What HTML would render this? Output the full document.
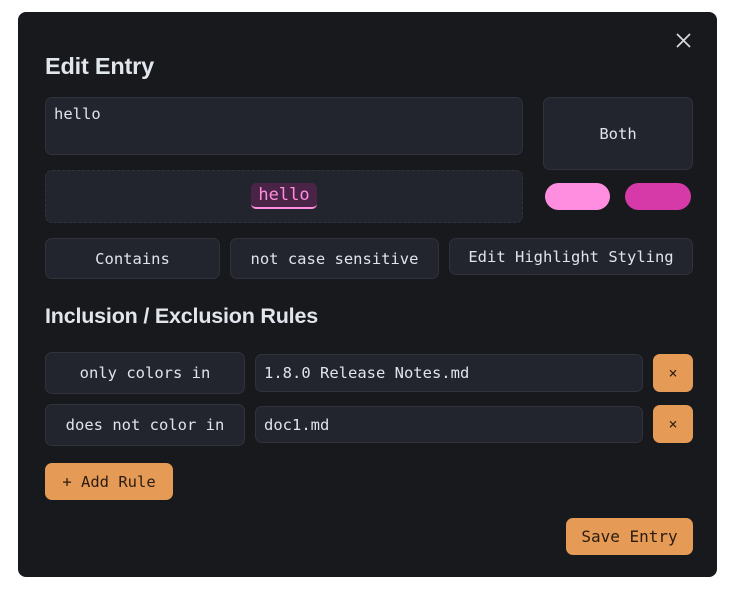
<!DOCTYPE html>
<html><head><style>
*{box-sizing:border-box;margin:0;padding:0}
body{width:735px;height:600px;background:#fff;position:relative;overflow:hidden;font-family:"DejaVu Sans Mono",monospace;}
.m{position:absolute;left:18px;top:12px;width:699px;height:565px;background:#18191d;border-radius:8px}
.a{position:absolute}
.box{position:absolute;background:#22242e;border:1px solid #30333c;border-radius:7px;color:#dfe4ea;font-size:15.5px;display:flex;align-items:center;justify-content:center}
.h{position:absolute;font-family:"Liberation Sans",sans-serif;font-weight:bold;color:#e1e6ec;letter-spacing:-0.2px}
.or{position:absolute;background:#e59a56;border-radius:7px;color:#2a1c10;font-size:15.5px;display:flex;align-items:center;justify-content:center}
</style></head><body>
<div class="m"></div>
<svg class="a" style="left:676px;top:33px" width="15" height="15"><path d="M1 1L14 14M14 1L1 14" stroke="#d6dbe2" stroke-width="1.7"/></svg>
<div class="h" style="left:45px;top:53px;font-size:23.5px">Edit Entry</div>
<div class="box" style="left:45px;top:97px;width:478px;height:58px;align-items:flex-start;justify-content:flex-start;padding:7px 0 0 8px">hello</div>
<div class="box" style="left:543px;top:97px;width:150px;height:73px">Both</div>
<div class="box" style="left:45px;top:170px;width:478px;height:53px;border:1px dashed #30333c"></div>
<div class="a" style="left:251px;top:183px;width:66px;height:26px;background:#4a2447;border-radius:5px;border-bottom:2px solid #ff8ee0;color:#ff8ee0;font-size:17px;text-align:center;line-height:24px">hello</div>
<div class="a" style="left:545px;top:183px;width:65px;height:27px;background:#ff8ee0;border-radius:14px"></div>
<div class="a" style="left:625px;top:183px;width:66px;height:27px;background:#d63aa8;border-radius:14px"></div>
<div class="box" style="left:45px;top:238px;width:175px;height:41px">Contains</div>
<div class="box" style="left:230px;top:238px;width:209px;height:41px">not case sensitive</div>
<div class="box" style="left:449px;top:238px;width:244px;height:37px">Edit Highlight Styling</div>
<div class="h" style="left:45px;top:304px;font-size:21.5px">Inclusion / Exclusion Rules</div>
<div class="box" style="left:45px;top:352px;width:200px;height:42px">only colors in</div>
<div class="box" style="left:255px;top:354px;width:388px;height:38px;justify-content:flex-start;padding-left:8px">1.8.0 Release Notes.md</div>
<div class="or" style="left:653px;top:354px;width:40px;height:38px;font-size:15px">×</div>
<div class="box" style="left:45px;top:404px;width:200px;height:42px">does not color in</div>
<div class="box" style="left:255px;top:406px;width:388px;height:37px;justify-content:flex-start;padding-left:8px">doc1.md</div>
<div class="or" style="left:653px;top:405px;width:40px;height:38px;font-size:15px">×</div>
<div class="or" style="left:45px;top:463px;width:128px;height:37px">+ Add Rule</div>
<div class="or" style="left:566px;top:518px;width:127px;height:37px;font-size:16px">Save Entry</div>
</body></html>
